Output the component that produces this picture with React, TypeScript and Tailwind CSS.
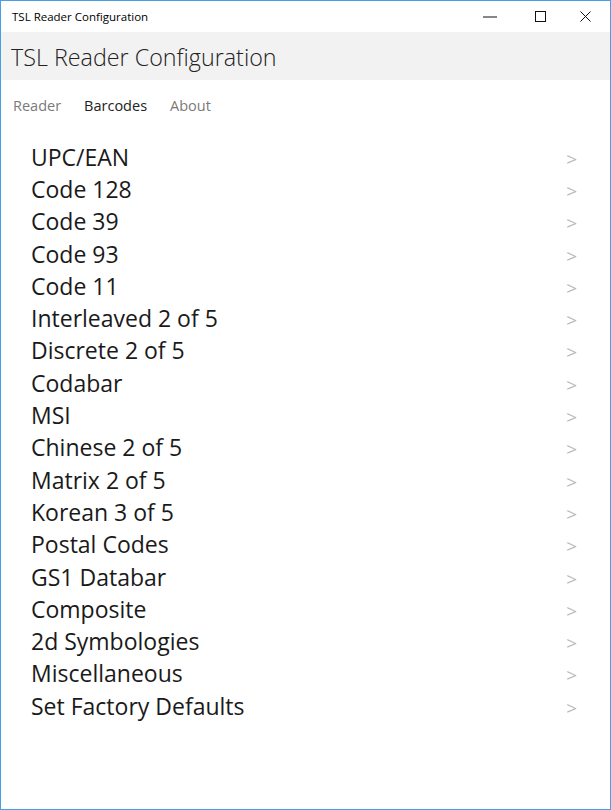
const items = [
  'UPC/EAN',
  'Code 128',
  'Code 39',
  'Code 93',
  'Code 11',
  'Interleaved 2 of 5',
  'Discrete 2 of 5',
  'Codabar',
  'MSI',
  'Chinese 2 of 5',
  'Matrix 2 of 5',
  'Korean 3 of 5',
  'Postal Codes',
  'GS1 Databar',
  'Composite',
  '2d Symbologies',
  'Miscellaneous',
  'Set Factory Defaults',
]

export default function App() {
  return (
    <div className="w-[611px] h-[810px] border border-[#4a9fe4] bg-white flex flex-col font-['Open_Sans',sans-serif] text-[#1a1a1a] overflow-hidden">
      {/* Title bar */}
      <div className="h-[31px] flex items-center justify-between shrink-0">
        <span className="pl-[11px] text-[11.5px] text-black">TSL Reader Configuration</span>
        <div className="flex items-center h-full pr-[19px]">
          <svg width="14" height="11" viewBox="0 0 14 11">
            <line x1="0" y1="6" x2="14" y2="6" stroke="#111" strokeWidth="1" />
          </svg>
          <svg width="11" height="11" viewBox="0 0 11 11" className="ml-[38px]">
            <rect x="0.5" y="0.5" width="10" height="10" fill="none" stroke="#111" strokeWidth="1" />
          </svg>
          <svg width="11" height="11" viewBox="0 0 11 11" className="ml-[34px]">
            <path d="M0.5 0.5 L10.5 10.5 M10.5 0.5 L0.5 10.5" stroke="#111" strokeWidth="1" />
          </svg>
        </div>
      </div>

      {/* App header */}
      <div className="h-[48px] bg-[#f2f2f2] flex items-center shrink-0">
        <span className="pl-[10px] pt-[3px] text-[23.3px] font-light text-[#222]">TSL Reader Configuration</span>
      </div>

      {/* Tabs */}
      <div className="h-[50px] flex items-center gap-[23px] pl-[12px] pt-[2px] text-[14.5px] shrink-0">
        <span className="text-[#7a7a7a]">Reader</span>
        <span className="text-[#222]">Barcodes</span>
        <span className="text-[#7a7a7a]">About</span>
      </div>

      {/* List */}
      <div className="pt-[11px] pl-[30px] pr-[33px] flex flex-col">
        {items.map((item) => (
          <div key={item} className="h-[32.3px] flex items-center justify-between">
            <span className="text-[23px] leading-none">{item}</span>
            <span className="text-[19px] text-[#b8b8b8] leading-none pt-[4px]">&gt;</span>
          </div>
        ))}
      </div>
    </div>
  )
}
